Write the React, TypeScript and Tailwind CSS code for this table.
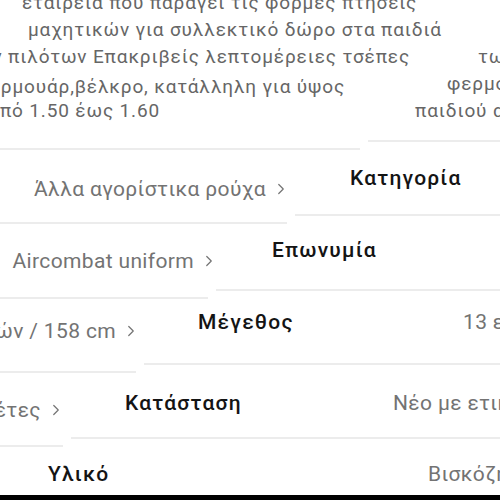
import { ChevronRight } from "lucide-react"

const description = [
  "εταιρεία που παράγει τις φόρμες πτήσεις",
  "μαχητικών για συλλεκτικό δώρο στα παιδιά",
  "των πιλότων Επακριβείς λεπτομέρειες τσέπες",
  "φερμουάρ,βέλκρο, κατάλληλη για ύψος",
  "παιδιού από 1.50 έως 1.60",
]

function Value({ text }: { text: string }) {
  return (
    <span className="inline-flex items-center whitespace-nowrap text-[21px] leading-[28px] tracking-[0.35px] text-[#737373]">
      {text}
      <ChevronRight className="ml-[6px] w-[18px] h-[18px]" strokeWidth={1.6} />
    </span>
  )
}

function Label({ text }: { text: string }) {
  return (
    <span className="whitespace-nowrap text-[21px] leading-[28px] tracking-[1.2px] font-medium text-[#141414]">
      {text}
    </span>
  )
}

// one separator: the wrapped part on the right sits 8px higher
function Rule({ left }: { left: string }) {
  return (
    <div className="flex items-start h-[10px]">
      <div className={`${left} shrink-0 h-[2px] mt-[8px] bg-[#ececec]`} />
      <div className="flex-1 h-[2px] ml-[8px] bg-[#ececec]" />
    </div>
  )
}

export default function App() {
  return (
    <div className="w-[500px] h-[500px] bg-white overflow-hidden font-[Roboto,sans-serif]">
      <div className="h-[495px] overflow-hidden">
        {/* description */}
        <div className="-mt-[11px] text-[19px] leading-[27px] tracking-[0.85px] text-[#666666] whitespace-nowrap">
          <div className="h-[27px] pl-[22px]">{description[0]}</div>
          <div className="h-[27px] pl-[28px]">{description[1]}</div>
          <div className="flex items-start h-[27px]">
            <div className="shrink-0 w-[800px] -ml-[390px] text-right">{description[2]}</div>
            <div className="shrink-0 ml-[68px]">{description[2]}</div>
          </div>
          <div className="flex items-start h-[27px]">
            <div className="shrink-0 w-[800px] -ml-[455px] mt-[3px] text-right">{description[3]}</div>
            <div className="shrink-0 ml-[102px]">{description[3]}</div>
          </div>
          <div className="flex items-start h-[27px]">
            <div className="shrink-0 w-[800px] -ml-[640px] text-right">{description[4]}</div>
            <div className="shrink-0 ml-[255px]">{description[4]}</div>
          </div>
        </div>

        <div className="mt-[16px]">
          <Rule left="w-[360px]" />
          <div className="flex items-start h-[64px]">
            <div className="shrink-0 w-[700px] -ml-[410px] mt-[25px] flex justify-end">
              <Value text="Άλλα αγορίστικα ρούχα" />
            </div>
            <div className="shrink-0 ml-[60px] mt-[14px]">
              <Label text="Κατηγορία" />
            </div>
          </div>

          <Rule left="w-[287px]" />
          <div className="flex items-start h-[65px]">
            <div className="shrink-0 w-[700px] -ml-[482px] mt-[23px] flex justify-end">
              <Value text="Aircombat uniform" />
            </div>
            <div className="shrink-0 ml-[54px] mt-[12px]">
              <Label text="Επωνυμία" />
            </div>
          </div>

          <Rule left="w-[208px]" />
          <div className="flex items-start h-[64px]">
            <div className="shrink-0 w-[700px] -ml-[560px] mt-[18px] flex justify-end">
              <Value text="13 ετών / 158 cm" />
            </div>
            <div className="shrink-0 ml-[58px] mt-[9px] flex">
              <div className="w-[265px] shrink-0">
                <Label text="Μέγεθος" />
              </div>
              <Value text="13 ετών / 158 cm" />
            </div>
          </div>

          <Rule left="w-[136px]" />
          <div className="flex items-start h-[64px]">
            <div className="shrink-0 w-[700px] -ml-[635px] mt-[23px] flex justify-end">
              <Value text="Νέο με ετικέτες" />
            </div>
            <div className="shrink-0 ml-[60px] mt-[16px] flex">
              <div className="w-[268px] shrink-0">
                <Label text="Κατάσταση" />
              </div>
              <Value text="Νέο με ετικέτες" />
            </div>
          </div>

          <Rule left="w-[63px]" />
          <div className="flex items-start h-[48px]">
            <div className="shrink-0 ml-[48px] mt-[13px] flex">
              <div className="w-[380px] shrink-0">
                <Label text="Υλικό" />
              </div>
              <Value text="Βισκόζη" />
            </div>
          </div>
        </div>
      </div>
      <div className="h-[5px] bg-black" />
    </div>
  )
}
